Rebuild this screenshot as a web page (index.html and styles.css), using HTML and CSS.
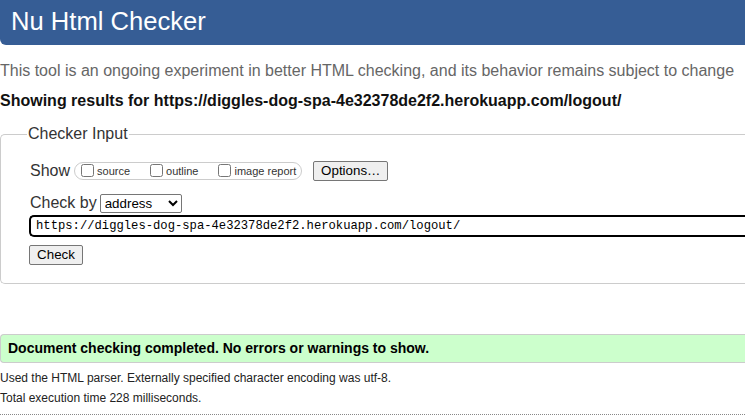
FILE: index.html
```html
<!DOCTYPE html>
<html lang="en">
<head>
<meta charset="utf-8">
<title>Showing results for https://diggles-dog-spa-4e32378de2f2.herokuapp.com/logout/ - Nu Html Checker</title>
<link rel="stylesheet" href="styles.css">
</head>
<body>
<header class="banner"><h1 class="title">Nu Html Checker</h1></header>
<p class="intro">This tool is an ongoing experiment in better HTML checking, and its behavior remains subject to change</p>
<p class="showing">Showing results for https://diggles-dog-spa-4e32378de2f2.herokuapp.com/logout/</p>
<form class="checker">
  <fieldset class="panel">
    <legend class="legend">Checker Input</legend>
    <div class="row row-show">
      <span class="label">Show</span>
      <span class="group">
        <label class="opt"><input type="checkbox" class="cb">source</label>
        <label class="opt"><input type="checkbox" class="cb">outline</label>
        <label class="opt last"><input type="checkbox" class="cb">image report</label>
      </span>
      <button type="button" class="btn btn-options">Options…</button>
    </div>
    <div class="row row-by">
      <span class="label">Check by</span>
      <select class="select"><option>address</option><option>file upload</option><option>text input</option></select>
    </div>
    <div class="row row-url">
      <input class="url" type="url" value="https://diggles-dog-spa-4e32378de2f2.herokuapp.com/logout/">
    </div>
    <div class="row row-submit">
      <button type="button" class="btn btn-check">Check</button>
    </div>
  </fieldset>
</form>
<p class="success">Document checking completed. No errors or warnings to show.</p>
<div class="details">
  <p class="detail">Used the HTML parser. Externally specified character encoding was utf-8.</p>
  <p class="detail">Total execution time 228 milliseconds.</p>
</div>
<hr class="rule">
</body>
</html>
```
FILE: styles.css
```css
html, body {
  margin: 0;
  padding: 0;
  overflow: hidden;
  background: #fff;
}
body {
  font-family: "Liberation Sans", Arial, sans-serif;
  color: #222;
  width: 745px;
}
.banner {
  background: #365d95;
  height: 45px;
  border-bottom-left-radius: 6px;
}
.title {
  margin: 0;
  padding-left: 11px;
  font-size: 25.6px;
  font-weight: normal;
  line-height: 42px;
  color: #fff;
}
.intro {
  margin: 17px 0 0;
  font-size: 16px;
  line-height: 18.4px;
  color: #666;
  white-space: nowrap;
}
.showing {
  margin: 12px 0 0;
  font-size: 16px;
  line-height: 18.4px;
  font-weight: bold;
  color: #111;
  white-space: nowrap;
}
.checker {
  margin: 14px 0 0;
}
.panel {
  margin: 0;
  padding: 17px 0 18px 28px;
  border: 1px solid #ccc;
  border-right: none;
  border-radius: 5px 0 0 5px;
}
.legend {
  margin-left: -2px;
  padding: 0 1px;
  font-size: 16px;
  line-height: 18.4px;
  color: #333;
}
.row {
  display: flex;
  align-items: center;
}
.label {
  font-size: 16px;
  line-height: 18.4px;
  color: #333;
  margin-left: 1px;
}
.row-show {
  height: 21px;
}
.group {
  display: flex;
  align-items: center;
  height: 16px;
  margin-left: 4px;
  padding: 0 5px 0 6px;
  border: 1px solid #ccc;
  border-radius: 9px;
  font-size: 11px;
  color: #333;
}
.opt {
  display: flex;
  align-items: center;
  margin-right: 20px;
}
.opt.last {
  margin-right: 0;
}
.cb {
  margin: 0 3px 0 0;
  width: 13px;
  height: 13px;
}
.btn {
  font-family: "Liberation Sans", Arial, sans-serif;
  font-size: 13.333px;
  color: #000;
  background: #efefef;
  border: 1px solid #767676;
  border-radius: 2px;
  padding: 0 6px;
  height: 20px;
  line-height: 18px;
}
.btn-options {
  margin-left: 11px;
  width: 75px;
}
.btn-check {
  width: 54px;
}
.row-by {
  margin-top: 12.5px;
  height: 19px;
}
.select {
  margin-left: 3px;
  height: 19px;
  width: 82px;
  font-family: "Liberation Sans", Arial, sans-serif;
  font-size: 13.333px;
  color: #000;
  border: 1px solid #767676;
  border-radius: 2px;
  background: #fff;
}
.row-url {
  margin-top: 2px;
}
.url {
  box-sizing: border-box;
  width: 100%;
  height: 22px;
  margin: 0;
  padding: 0 5px;
  border: 2px solid #000;
  border-right: none;
  border-radius: 5px 0 0 5px;
  outline: none;
  font-family: "Liberation Mono", Consolas, monospace;
  font-size: 12.2px;
  color: #000;
  background: #fff;
}
.row-submit {
  margin-top: 8px;
}
.success {
  margin: 50px 0 0;
  height: 27px;
  padding-left: 7px;
  background: #ccffcc;
  border: 1px solid #ccc;
  border-right: none;
  border-radius: 4px 0 0 4px;
  font-size: 14px;
  font-weight: bold;
  line-height: 27px;
  color: #000;
}
.details {
  margin-top: 5px;
}
.detail {
  margin: 0;
  font-size: 12px;
  line-height: 20px;
  color: #222;
}
.rule {
  margin: 6px 0 0;
  border: none;
  border-top: 1px dotted #888;
  height: 0;
}
```
